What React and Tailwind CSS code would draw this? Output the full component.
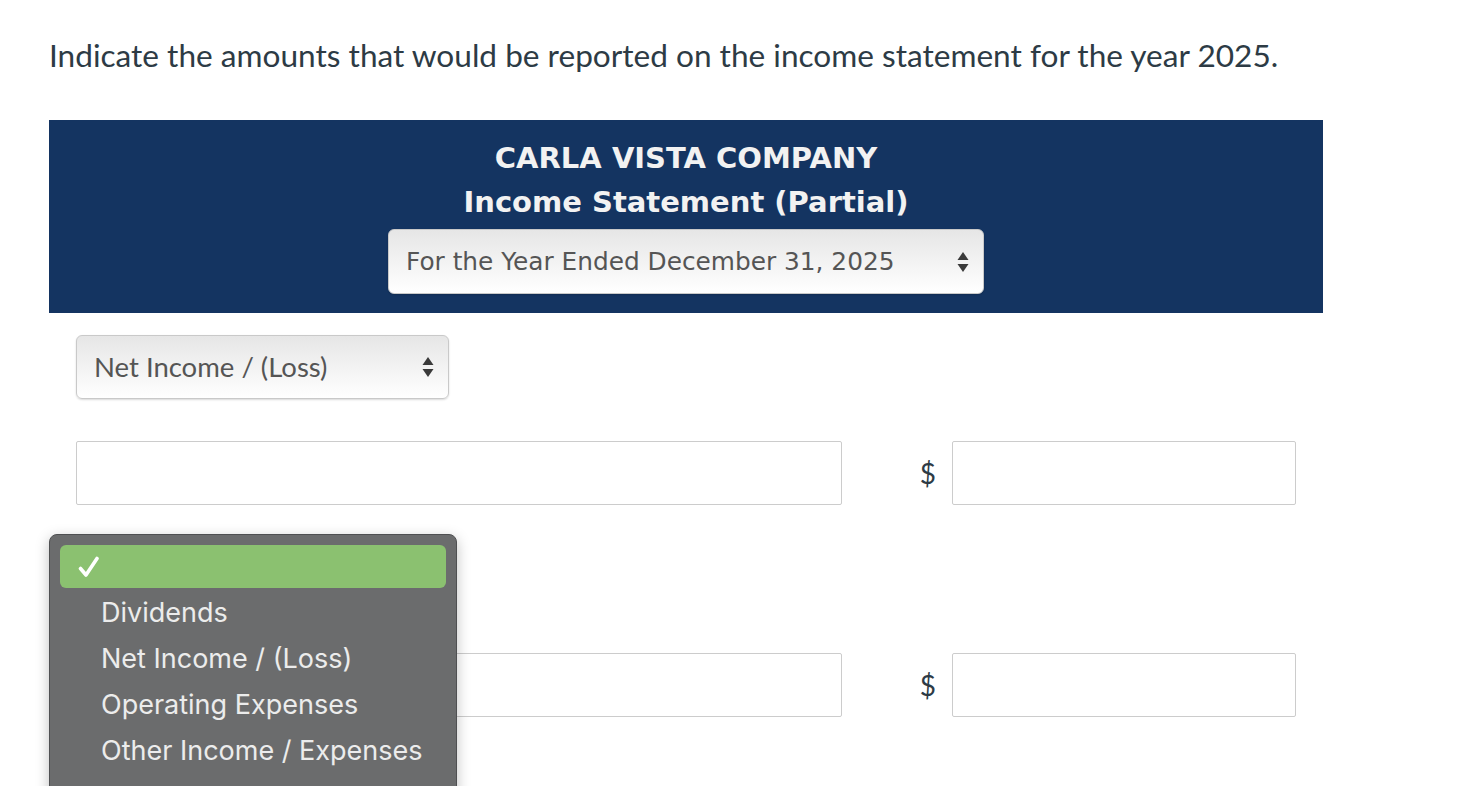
import React from "react";

const menuItems = [
  "Dividends",
  "Net Income / (Loss)",
  "Operating Expenses",
  "Other Income / Expenses",
  "Revenues",
];

const Arrows = () => (
  <svg width="12" height="22" viewBox="0 0 12 22" className="shrink-0">
    <path d="M6 1 L11.5 9 H0.5 Z" fill="#3a3a3a" />
    <path d="M6 21 L11.5 13 H0.5 Z" fill="#3a3a3a" />
  </svg>
);

const SelectBox = ({ label, className, textClass }) => (
  <div
    className={
      "flex items-center justify-between rounded-[6px] border border-[#c9c9c9] bg-gradient-to-b from-[#e6e6e6] to-[#ffffff] shadow-[0_1px_2px_rgba(0,0,0,0.15)] " +
      className
    }
  >
    <span className={textClass}>{label}</span>
    <Arrows />
  </div>
);

const InputRow = () => (
  <div className="flex items-center h-[64px]">
    <div className="ml-[27px] w-[766px] h-[64px] border border-[#cccccc] rounded-[2px] bg-white" />
    <div className="w-[110px] flex justify-end pr-[16px] text-[28px] text-[#2d3b45] font-['Lato',sans-serif]">
      $
    </div>
    <div className="w-[344px] h-[64px] border border-[#cccccc] rounded-[2px] bg-white" />
  </div>
);

export default function App() {
  return (
    <div className="relative h-[786px] overflow-hidden bg-white font-['Lato',sans-serif]">
      <div className="pl-[49px] pt-[36px]">
        <p className="text-[31.6px] leading-[38px] text-[#2d3b45] whitespace-nowrap">
          Indicate the amounts that would be reported on the income statement for the year 2025.
        </p>

        <div className="mt-[46px] w-[1274px] h-[193px] bg-[#143461] flex flex-col items-center pt-[16px]">
          <div className="font-['DejaVu_Sans',sans-serif] font-bold text-[29px] leading-[44px] text-[#f2f2f2]">
            CARLA VISTA COMPANY
          </div>
          <div className="font-['DejaVu_Sans',sans-serif] font-bold text-[29px] leading-[44px] text-[#f2f2f2]">
            Income Statement (Partial)
          </div>
          <SelectBox
            label="For the Year Ended December 31, 2025"
            className="mt-[5px] w-[596px] h-[65px] pl-[17px] pr-[14px]"
            textClass="font-['DejaVu_Sans',sans-serif] text-[24.8px] text-[#555555] whitespace-nowrap"
          />
        </div>

        <div className="flex flex-col gap-[42px] mt-[22px]">
          <SelectBox
            label="Net Income / (Loss)"
            className="ml-[27px] w-[373px] h-[64px] pl-[17px] pr-[14px]"
            textClass="text-[27.5px] text-[#555555]"
          />
          <InputRow />
          <SelectBox
            label=""
            className="ml-[27px] w-[373px] h-[64px] pl-[17px] pr-[14px]"
            textClass="text-[27.5px] text-[#555555]"
          />
          <InputRow />
          <SelectBox
            label=""
            className="ml-[27px] w-[373px] h-[64px] pl-[17px] pr-[14px]"
            textClass="text-[27.5px] text-[#555555]"
          />
        </div>
      </div>

      <div className="absolute left-[49px] top-[534px] w-[408px] h-[300px] rounded-[8px] border border-[#4f5052] bg-[#6b6c6d] shadow-[0_4px_14px_rgba(0,0,0,0.25)] px-[10px] pt-[10px] font-['Inter',sans-serif]">
        <div className="h-[43px] rounded-[6px] bg-[#8bc170] flex items-center pl-[18px]">
          <svg width="22" height="24" viewBox="0 0 22 24">
            <path
              d="M2.5 13.5 L8 20 L19 3.5"
              fill="none"
              stroke="#ffffff"
              strokeWidth="3.6"
              strokeLinecap="round"
              strokeLinejoin="round"
            />
          </svg>
        </div>
        <div className="flex flex-col mt-[2px]">
          {menuItems.map((item) => (
            <div
              key={item}
              className="h-[46px] flex items-center pl-[41px] text-[27px] text-[#ececec] whitespace-nowrap"
            >
              {item}
            </div>
          ))}
        </div>
      </div>
    </div>
  );
}
